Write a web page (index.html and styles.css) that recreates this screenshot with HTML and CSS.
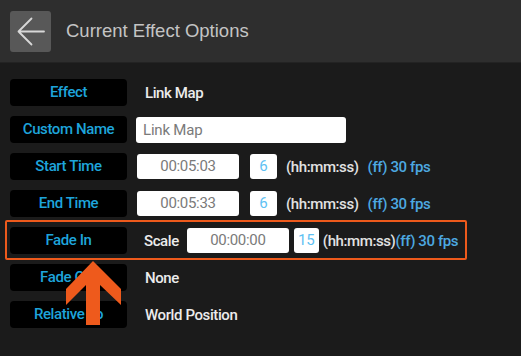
FILE: index.html
```html
<!DOCTYPE html>
<html lang="en">
  <head>
    <meta charset="UTF-8" />
    <meta name="viewport" content="width=device-width, initial-scale=1.0" />
    <title>Current Effect Options</title>
    <link rel="stylesheet" href="styles.css">
  </head>
  <body>
    <div class="screen">
      <div class="topbar">
        <div class="back-btn">
          <svg width="41" height="41" viewBox="0 0 41 41">
            <path d="M34 20.5 H8.5 M21.5 7.5 L8.5 20.5 L21.5 33.5" fill="none" stroke="#d8d8d8" stroke-width="1.8" stroke-linecap="round" stroke-linejoin="round" />
          </svg>
        </div>
        <h1 class="title">Current Effect Options</h1>
      </div>

      <div class="options">
        <div class="row">
          <div class="label">Effect</div>
          <span class="value">Link Map</span>
        </div>

        <div class="row">
          <div class="label">Custom Name</div>
          <div class="field field-name">Link Map</div>
        </div>

        <div class="row">
          <div class="label">Start Time</div>
          <div class="field field-time">00:05:03</div>
          <div class="field field-frame">6</div>
          <span class="unit">(hh:mm:ss)</span>
          <span class="fps">(ff) 30 fps</span>
        </div>

        <div class="row">
          <div class="label">End Time</div>
          <div class="field field-time">00:05:33</div>
          <div class="field field-frame">6</div>
          <span class="unit">(hh:mm:ss)</span>
          <span class="fps">(ff) 30 fps</span>
        </div>

        <div class="row row-fade">
          <div class="label">Fade In</div>
          <span class="value">Scale</span>
          <div class="field field-time">00:00:00</div>
          <div class="field field-frame">15</div>
          <span class="unit">(hh:mm:ss)</span>
          <span class="fps">(ff) 30 fps</span>
        </div>

        <div class="row">
          <div class="label">Fade Out</div>
          <span class="value">None</span>
        </div>

        <div class="row">
          <div class="label">Relative To</div>
          <span class="value">World Position</span>
        </div>
      </div>

      <!-- annotation -->
      <div class="highlight"></div>
      <svg class="pointer" width="62" height="66" viewBox="0 0 62 66">
        <polygon points="33,1 61,29 61,45 40,25 40,65 26,65 26,25 6,45 6,29" fill="#ee5a1c" />
      </svg>
    </div>
  </body>
</html>
```

FILE: styles.css
```css
body {
  margin: 0;
  background: #1b1b1b;
  font-family: Roboto, "Liberation Sans", sans-serif;
}
.screen {
  position: relative;
  width: 521px;
  height: 356px;
  overflow: hidden;
  background: #1b1b1b;
}
.topbar {
  height: 63px;
  display: flex;
  align-items: center;
  padding-left: 10px;
  background: #2e2e2e;
  border-bottom: 1px solid #232323;
  box-sizing: border-box;
}
.back-btn {
  width: 41px;
  height: 41px;
  background: #585858;
  border-radius: 3px;
}
.back-btn svg {
  display: block;
}
.title {
  margin: 0 0 0 15px;
  font-family: "Liberation Sans", Arial, sans-serif;
  font-size: 18.5px;
  font-weight: normal;
  color: #c4c4c4;
}
.options {
  display: flex;
  flex-direction: column;
  gap: 10px;
  padding: 16px 0 0 10px;
}
.row {
  display: flex;
  align-items: center;
  height: 27px;
}
.label {
  width: 117px;
  height: 27px;
  line-height: 27px;
  background: #000;
  border-radius: 4px;
  text-align: center;
  color: #1ea4db;
  font-size: 15px;
  font-weight: 500;
  letter-spacing: -0.4px;
}
.value {
  margin-left: 18px;
  color: #ececec;
  font-size: 15px;
  font-weight: 500;
  letter-spacing: -0.4px;
}
.field {
  height: 25px;
  line-height: 25px;
  background: #fff;
  border-radius: 3px;
  color: #7a7a7a;
  font-size: 15px;
  box-sizing: border-box;
}
.field-name {
  width: 210px;
  height: 26px;
  line-height: 26px;
  margin-left: 9px;
  padding-left: 7px;
  letter-spacing: -0.2px;
}
.field-time {
  width: 102px;
  margin-left: 10px;
  text-align: center;
  letter-spacing: -0.3px;
}
.field-frame {
  width: 27px;
  margin-left: 11px;
  text-align: center;
  color: #5ec1f3;
}
.unit {
  margin-left: 9px;
  color: #e2e2e2;
  font-size: 15px;
  font-weight: 500;
  letter-spacing: -0.4px;
}
.fps {
  margin-left: 9px;
  color: #4da9e1;
  font-size: 15px;
  font-weight: 500;
  letter-spacing: -0.4px;
}
.row-fade .value {
  margin-left: 17px;
}
.row-fade .field-time {
  margin-left: 8px;
}
.row-fade .field-frame {
  width: 25px;
  margin-left: 5px;
}
.row-fade .unit {
  margin-left: 4px;
}
.row-fade .fps {
  margin-left: 0;
}
.highlight {
  position: absolute;
  left: 5px;
  top: 220px;
  width: 462px;
  height: 40px;
  border: 2px solid #ee5a1c;
  border-radius: 2px;
  box-sizing: border-box;
}
.pointer {
  position: absolute;
  left: 60px;
  top: 260px;
}
```
